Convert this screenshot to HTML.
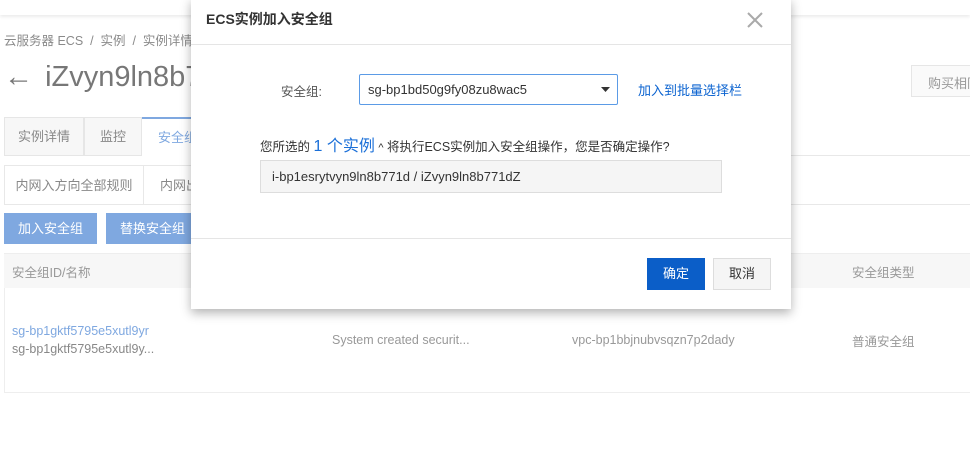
<!DOCTYPE html>
<html><head><meta charset="utf-8"><style>
*{box-sizing:border-box;margin:0;padding:0}
body{width:970px;height:475px;overflow:hidden;background:#fff;font-family:"Liberation Sans","Noto Sans CJK SC",sans-serif;position:relative;color:#666}
.a{position:absolute;white-space:nowrap}
.fade{color:#8a8a8a}
</style></head><body>
<div class="a" style="left:0;top:0;width:970px;height:15px;background:#fff;box-shadow:0 2px 3px rgba(0,0,0,.08)"></div>
<div class="a fade" style="left:4px;top:30px;font-size:12.5px">云服务器 ECS &nbsp;/&nbsp; 实例 &nbsp;/&nbsp; 实例详情</div>
<div class="a" style="left:4px;top:61px;font-size:29px;color:#777">←&nbsp;<span style="font-size:29px;margin-left:4px">iZvyn9ln8b771dZ</span></div>
<div class="a" style="left:911px;top:65px;width:70px;height:32px;border:1px solid #e6e6e6;background:#fafafa;font-size:13px;padding:7px 0 0 16px;color:#999">购买相同</div>
<div class="a" style="left:4px;top:117px;width:80px;height:39px;border:1px solid #e6e6e6;background:#f7f7f7;font-size:13px;text-align:center;line-height:38px;color:#888">实例详情</div>
<div class="a" style="left:84px;top:117px;width:58px;height:39px;border:1px solid #e6e6e6;background:#f7f7f7;font-size:13px;text-align:center;line-height:38px;color:#888">监控</div>
<div class="a" style="left:142px;top:117px;width:60px;height:39px;border-top:2px solid #7fa8e0;font-size:13px;line-height:37px;padding-left:16px;color:#7fa8e0">安全组</div>
<div class="a" style="left:202px;top:155px;width:768px;height:1px;background:#e8e8e8"></div>
<div class="a" style="left:4px;top:165px;width:140px;height:40px;border:1px solid #e8e8e8;font-size:13px;text-align:center;line-height:39px;color:#888">内网入方向全部规则</div>
<div class="a" style="left:144px;top:165px;width:60px;height:40px;border-top:1px solid #e8e8e8;border-bottom:1px solid #e8e8e8;font-size:13px;line-height:39px;padding-left:16px;color:#888">内网出</div>
<div class="a" style="left:204px;top:204px;width:766px;height:1px;background:#e8e8e8"></div>
<div class="a" style="left:4px;top:213px;width:93px;height:31px;background:#7fa8e0;color:#fff;font-size:13px;text-align:center;line-height:31px">加入安全组</div>
<div class="a" style="left:106px;top:213px;width:93px;height:31px;background:#7fa8e0;color:#fff;font-size:13px;text-align:center;line-height:31px">替换安全组</div>
<div class="a" style="left:4px;top:253px;width:970px;height:35px;background:#f7f7f7;border-top:1px solid #eee"></div>
<div class="a" style="left:12px;top:262px;font-size:12.5px;color:#999">安全组ID/名称</div>
<div class="a" style="left:852px;top:262px;font-size:12.5px;color:#999">安全组类型</div>
<div class="a" style="left:4px;top:288px;width:970px;height:105px;border-left:1px solid #eee;border-bottom:1px solid #eee"></div>
<div class="a" style="left:12px;top:324px;font-size:12.5px;color:#7fa8e0">sg-bp1gktf5795e5xutl9yr</div>
<div class="a" style="left:12px;top:342px;font-size:12.5px;color:#888">sg-bp1gktf5795e5xutl9y...</div>
<div class="a" style="left:332px;top:333px;font-size:12.5px;color:#999">System created securit...</div>
<div class="a" style="left:572px;top:333px;font-size:12.5px;color:#999">vpc-bp1bbjnubvsqzn7p2dady</div>
<div class="a" style="left:852px;top:331px;font-size:12.5px;color:#999">普通安全组</div>

<div class="a" style="left:191px;top:-2px;width:600px;height:311px;background:#fff;box-shadow:0 4px 10px rgba(0,0,0,.3)">
 <div class="a" style="left:15px;top:11px;font-size:14px;font-weight:bold;color:#333">ECS实例加入安全组</div>
 <svg class="a" style="left:555px;top:13px" width="18" height="18"><path d="M2 2L16 16M16 2L2 16" stroke="#aaa" stroke-width="2"/></svg>
 <div class="a" style="left:0;top:46px;width:600px;height:1px;background:#e5e5e5"></div>
 <div class="a" style="left:90px;top:83px;font-size:12.5px;color:#555">安全组:</div>
 <div class="a" style="left:168px;top:76px;width:259px;height:31px;border:1px solid #5b9be6;border-radius:2px;font-size:13px;color:#333;padding:7px 0 0 8px">sg-bp1bd50g9fy08zu8wac5</div>
 <svg class="a" style="left:410px;top:89px" width="10" height="6"><path d="M0 0H9L4.5 5Z" fill="#333"/></svg>
 <div class="a" style="left:447px;top:82px;font-size:13px;color:#0b63d0">加入到批量选择栏</div>
 <div class="a" style="left:69px;top:134px;font-size:12.5px;color:#333">您所选的 <span style="font-size:16px;color:#1a6fd8">1 个实例</span> <span style="font-size:11px">^</span> 将执行ECS实例加入安全组操作，您是否确定操作?</div>
 <div class="a" style="left:69px;top:162px;width:462px;height:33px;background:#f5f5f5;border:1px solid #ddd;font-size:13px;color:#333;padding:8px 0 0 11px">i-bp1esrytvyn9ln8b771d / iZvyn9ln8b771dZ</div>
 <div class="a" style="left:0;top:240px;width:600px;height:1px;background:#e5e5e5"></div>
 <div class="a" style="left:456px;top:260px;width:58px;height:32px;background:#0b5ec8;color:#fff;font-size:13px;text-align:center;line-height:32px">确定</div>
 <div class="a" style="left:522px;top:260px;width:58px;height:32px;background:#f5f5f5;border:1px solid #ddd;color:#333;font-size:13px;text-align:center;line-height:30px">取消</div>
</div>
</body></html>
